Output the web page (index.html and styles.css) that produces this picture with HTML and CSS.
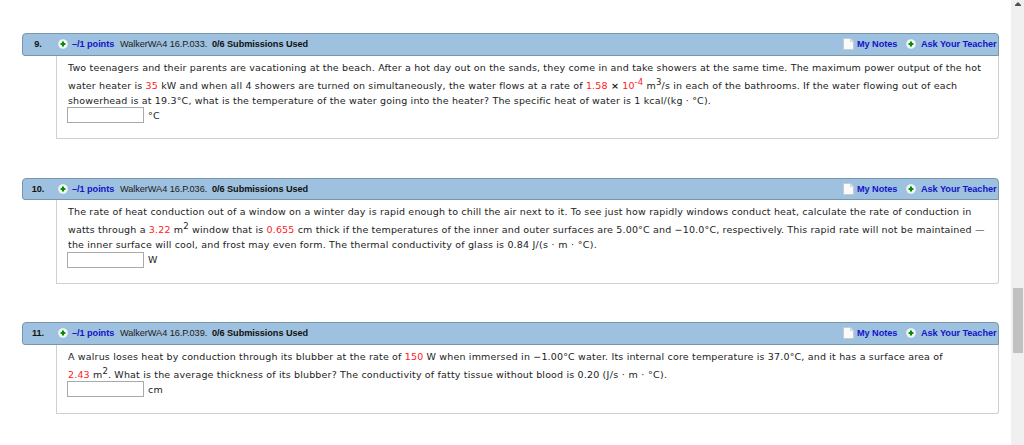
FILE: index.html
```
<!DOCTYPE html>
<html>
<head>
    <meta charset="utf-8">
    <title>Assignment</title>
    <link rel="stylesheet" href="styles.css">
</head>
<body>
    <svg width="0" height="0" class="defs">
        <symbol id="plus" viewBox="0 0 10 10">
            <circle cx="5" cy="5" r="4.8" fill="#f1f5f4"/>
            <path d="M4 2.6h2V4h1.4v2H6v1.4H4V6H2.6V4H4z" fill="#078a07"/>
        </symbol>
        <symbol id="note" viewBox="0 0 11 12">
            <path d="M.5.5h7l3 3v8H.5z" fill="#fafafa" stroke="#c4cbd1"/>
            <path d="M7.5.5v3h3" fill="#e6e6e6" stroke="#d0d4d8"/>
        </symbol>
    </svg>

    <div id="assignment">
        <div class="question">
            <div class="header">
                <span class="number">9.</span>
                <svg class="plus"><use href="#plus"/></svg>
                <a class="points">–/1 points</a>
                <span class="code">WalkerWA4 16.P.033.</span>
                <b class="used">0/6 Submissions Used</b>
                <svg class="note"><use href="#note"/></svg>
                <a class="notes">My Notes</a>
                <svg class="plus"><use href="#plus"/></svg>
                <a class="ask">Ask Your Teacher</a>
            </div>
            <div class="content">
                <div class="line">Two teenagers and their parents are vacationing at the beach. After a hot day out on the sands, they come in and take showers at the same time. The maximum power output of the hot</div>
                <div class="line tall">water heater is <em>35</em> kW and when all 4 showers are turned on simultaneously, the water flows at a rate of <em>1.58</em> <b>×</b> <em>10<sup>-4</sup></em> m<sup>3</sup>/s in each of the bathrooms. If the water flowing out of each</div>
                <div class="line">showerhead is at 19.3°C, what is the temperature of the water going into the heater? The specific heat of water is 1 kcal/(kg · °C).</div>
                <div class="answer"><input type="text"> °C</div>
            </div>
        </div>

        <div class="question">
            <div class="header">
                <span class="number">10.</span>
                <svg class="plus"><use href="#plus"/></svg>
                <a class="points">–/1 points</a>
                <span class="code">WalkerWA4 16.P.036.</span>
                <b class="used">0/6 Submissions Used</b>
                <svg class="note"><use href="#note"/></svg>
                <a class="notes">My Notes</a>
                <svg class="plus"><use href="#plus"/></svg>
                <a class="ask">Ask Your Teacher</a>
            </div>
            <div class="content">
                <div class="line">The rate of heat conduction out of a window on a winter day is rapid enough to chill the air next to it. To see just how rapidly windows conduct heat, calculate the rate of conduction in</div>
                <div class="line tall">watts through a <em>3.22</em> m<sup>2</sup> window that is <em>0.655</em> cm thick if the temperatures of the inner and outer surfaces are 5.00°C and −10.0°C, respectively. This rapid rate will not be maintained —</div>
                <div class="line">the inner surface will cool, and frost may even form. The thermal conductivity of glass is 0.84 <span class="unit">J/(s · m · °C).</span></div>
                <div class="answer"><input type="text"> W</div>
            </div>
        </div>

        <div class="question">
            <div class="header">
                <span class="number">11.</span>
                <svg class="plus"><use href="#plus"/></svg>
                <a class="points">–/1 points</a>
                <span class="code">WalkerWA4 16.P.039.</span>
                <b class="used">0/6 Submissions Used</b>
                <svg class="note"><use href="#note"/></svg>
                <a class="notes">My Notes</a>
                <svg class="plus"><use href="#plus"/></svg>
                <a class="ask">Ask Your Teacher</a>
            </div>
            <div class="content">
                <div class="line">A walrus loses heat by conduction through its blubber at the rate of <em>150</em> W when immersed in −1.00°C water. Its internal core temperature is 37.0°C, and it has a surface area of</div>
                <div class="line tall"><em>2.43</em> m<sup>2</sup>. What is the average thickness of its blubber? The conductivity of fatty tissue without blood is 0.20 <span class="unit">(J/s · m · °C).</span></div>
                <div class="answer"><input type="text"> cm</div>
            </div>
        </div>
    </div>

    <div id="scrollbar">
        <svg class="arrow" viewBox="0 0 6 4"><path d="M3 0l3 3v1H0V3z" fill="#505050"/></svg>
        <div class="thumb"></div>
    </div>
</body>
</html>
```
FILE: styles.css
```
body {
    margin: 0;
    height: 445px;
    display: flex;
    overflow: hidden;
    background-color: #ffffff;
    color: #1c1c1c;
    font-family: "DejaVu Sans", Verdana, sans-serif;
    font-size: 9.5px;
    letter-spacing: 0.165px;
}
.defs {
    position: absolute;
}
#assignment {
    flex: 1;
    min-width: 0;
    padding: 33px 12px 0 22px;
}
.question {
    margin-bottom: 38.5px;
}
.header {
    display: flex;
    align-items: center;
    box-sizing: border-box;
    height: 22.5px;
    padding-right: 2px;
    background-color: #9dc1df;
    border: 1px solid #7896ac;
    border-radius: 4px 4px 0 3px;
    font-family: "Liberation Sans", Arial, sans-serif;
    font-size: 9.2px;
    letter-spacing: -0.07px;
    white-space: nowrap;
}
.number {
    width: 30px;
    text-align: center;
    font-weight: bold;
    color: #111111;
}
.header a {
    color: #1414c8;
    font-weight: bold;
}
.header svg {
    flex-shrink: 0;
}
.plus {
    width: 10px;
    height: 10px;
}
.number + .plus {
    margin-left: 5px;
}
.points {
    width: 48px;
    margin-left: 4px;
}
.code {
    width: 92px;
}
.used {
    color: #111111;
}
.note {
    width: 11px;
    height: 12px;
    margin-left: auto;
}
.notes {
    width: 45px;
    margin-left: 3px;
}
.notes + .plus {
    margin-left: 4px;
}
.ask {
    width: 75px;
    margin-left: 5px;
}
.content {
    box-sizing: border-box;
    height: 83.5px;
    margin-left: 34px;
    padding: 4px 0 0 11px;
    border: 1px solid #d0d0d0;
    border-top: none;
    border-radius: 0 0 3px 0;
    white-space: nowrap;
}
.question:last-child .content {
    height: 69px;
}
.line {
    height: 15px;
    line-height: 15px;
}
.tall {
    height: 18px;
    line-height: 21px;
}
em {
    color: #ff1a1a;
    font-style: normal;
}
sup {
    font-size: 8.5px;
    line-height: 0;
    vertical-align: 4px;
}
.unit {
    letter-spacing: 0.3px;
}
.answer {
    display: flex;
    align-items: center;
    height: 15px;
    gap: 4px;
}
input {
    box-sizing: border-box;
    width: 77px;
    height: 16px;
    margin: 0 0 0 -1px;
    padding: 0;
    border: 1px solid #a9a9a9;
}
#scrollbar {
    flex: 0 0 13px;
    background-color: #f0f0f0;
}
.arrow {
    display: block;
    width: 6px;
    height: 4px;
    margin: 2px 0 0 4px;
}
.thumb {
    width: 10px;
    height: 65px;
    margin: 282px 0 0 2px;
    background-color: #c1c1c1;
}
```
